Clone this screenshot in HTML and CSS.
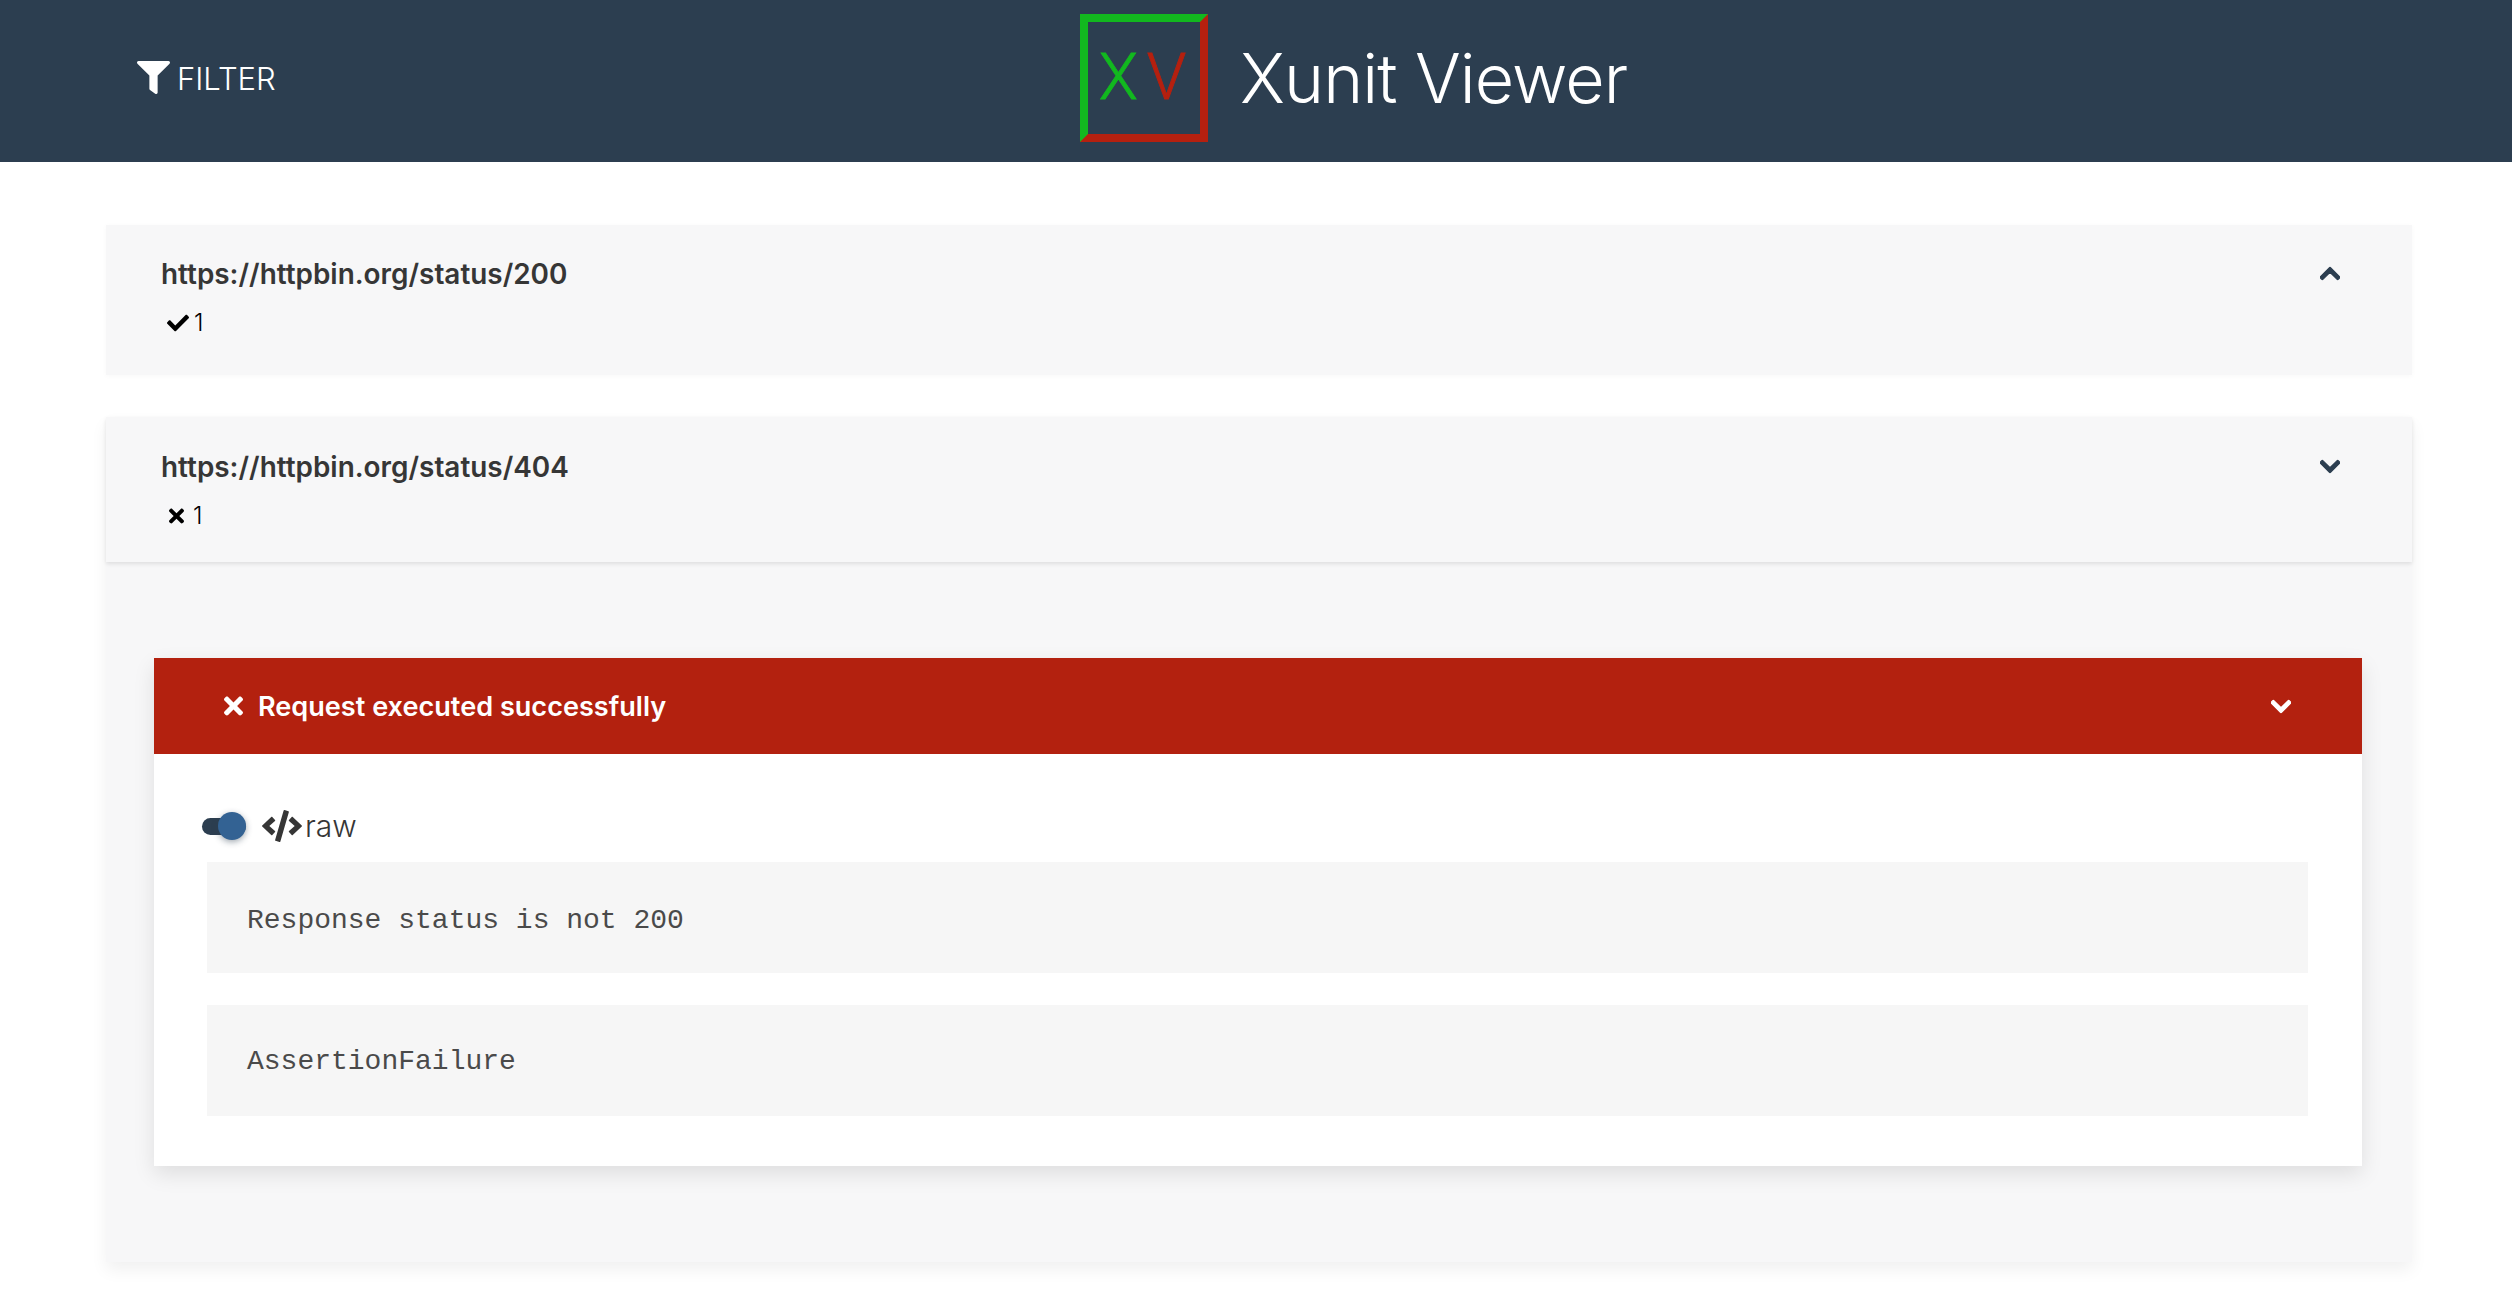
FILE: index.html
```html
<!DOCTYPE html>
<html lang="en">
<head>
<meta charset="utf-8">
<title>Xunit Viewer</title>
<link rel="stylesheet" href="styles.css">
</head>
<body>
<header class="topbar">
  <button class="filter-btn">
    <svg class="filter-icon" viewBox="0 0 512 512"><path d="M487.976 0H24.028C2.71 0-8.047 25.866 7.058 40.971L192 225.941V432c0 7.831 3.821 15.17 10.237 19.662l80 55.98C298.02 518.69 320 507.493 320 487.98V225.941l184.947-184.97C520.021 25.896 509.338 0 487.976 0z"/></svg>
    <span>FILTER</span>
  </button>
  <div class="brand">
    <div class="logo"><span class="logo-x">X</span><span class="logo-v">V</span></div>
    <h1 class="brand-name">Xunit Viewer</h1>
  </div>
</header>
<main class="suites">
  <section class="suite">
    <div class="suite-head">
      <div>
        <h2 class="suite-title">https://httpbin.org/status/200</h2>
        <div class="count">
          <svg class="count-check" viewBox="0 0 512 512"><path d="M173.898 439.404l-166.4-166.4c-9.997-9.997-9.997-26.206 0-36.204l36.203-36.204c9.997-9.998 26.207-9.998 36.204 0L192 312.69 432.095 72.596c9.997-9.997 26.207-9.997 36.204 0l36.203 36.204c9.997 9.997 9.997 26.206 0 36.204l-294.4 294.401c-9.998 9.997-26.207 9.997-36.204-.001z"/></svg>
          <span>1</span>
        </div>
      </div>
      <svg class="chevron" viewBox="0 0 448 512"><path d="M240.971 130.524l194.343 194.343c9.373 9.373 9.373 24.569 0 33.941l-22.667 22.667c-9.357 9.357-24.522 9.375-33.901.04L224 227.495 69.255 381.516c-9.379 9.335-24.544 9.317-33.901-.04l-22.667-22.667c-9.373-9.373-9.373-24.569 0-33.941L207.03 130.525c9.372-9.373 24.568-9.373 33.941-.001z"/></svg>
    </div>
  </section>
  <section class="suite suite-open">
    <div class="suite-head suite-head-open">
      <div>
        <h2 class="suite-title">https://httpbin.org/status/404</h2>
        <div class="count">
          <svg class="count-times" viewBox="0 0 352 512"><path d="M242.72 256l100.07-100.07c12.28-12.28 12.28-32.19 0-44.48l-22.24-22.24c-12.28-12.28-32.19-12.28-44.48 0L176 189.28 75.93 89.21c-12.28-12.28-32.19-12.28-44.48 0L9.21 111.45c-12.28 12.28-12.28 32.19 0 44.48L109.28 256 9.21 356.07c-12.28 12.28-12.28 32.19 0 44.48l22.24 22.24c12.28 12.28 32.2 12.28 44.48 0L176 322.72l100.07 100.07c12.28 12.28 32.2 12.28 44.48 0l22.24-22.24c12.28-12.28 12.28-32.19 0-44.48L242.72 256z"/></svg>
          <span>1</span>
        </div>
      </div>
      <svg class="chevron" viewBox="0 0 448 512"><path d="M207.029 381.476L12.686 187.132c-9.373-9.373-9.373-24.569 0-33.941l22.667-22.667c9.357-9.357 24.522-9.375 33.901-.04L224 284.505l154.745-154.021c9.379-9.335 24.544-9.317 33.901.04l22.667 22.667c9.373 9.373 9.373 24.569 0 33.941L240.971 381.476c-9.373 9.372-24.569 9.372-33.942 0z"/></svg>
    </div>
    <div class="suite-body">
      <article class="test">
        <div class="test-head">
          <div class="test-label">
            <svg class="test-times" viewBox="0 0 352 512"><path d="M242.72 256l100.07-100.07c12.28-12.28 12.28-32.19 0-44.48l-22.24-22.24c-12.28-12.28-32.19-12.28-44.48 0L176 189.28 75.93 89.21c-12.28-12.28-32.19-12.28-44.48 0L9.21 111.45c-12.28 12.28-12.28 32.19 0 44.48L109.28 256 9.21 356.07c-12.28 12.28-12.28 32.19 0 44.48l22.24 22.24c12.28 12.28 32.2 12.28 44.48 0L176 322.72l100.07 100.07c12.28 12.28 32.2 12.28 44.48 0l22.24-22.24c12.28-12.28 12.28-32.19 0-44.48L242.72 256z"/></svg>
            <span>Request executed successfully</span>
          </div>
          <svg class="chevron chevron-light" viewBox="0 0 448 512"><path d="M207.029 381.476L12.686 187.132c-9.373-9.373-9.373-24.569 0-33.941l22.667-22.667c9.357-9.357 24.522-9.375 33.901-.04L224 284.505l154.745-154.021c9.379-9.335 24.544-9.317 33.901.04l22.667 22.667c9.373 9.373 9.373 24.569 0 33.941L240.971 381.476c-9.373 9.372-24.569 9.372-33.942 0z"/></svg>
        </div>
        <div class="test-body">
          <div class="raw-row">
            <div class="toggle"><span class="toggle-knob"></span></div>
            <svg class="code-icon" viewBox="0 0 640 512"><path d="M278.9 511.5l-61-17.7c-6.4-1.8-10-8.5-8.2-14.9L346.2 8.7c1.8-6.4 8.5-10 14.9-8.2l61 17.7c6.4 1.8 10 8.5 8.2 14.9L293.8 503.3c-1.9 6.4-8.5 10.1-14.9 8.2zm-114-112.2l43.5-46.4c4.6-4.9 4.3-12.7-.8-17.2L117 256l90.6-79.7c5.1-4.5 5.5-12.3.8-17.2l-43.5-46.4c-4.5-4.8-12.1-5.1-17-.5L3.8 247.2c-5.1 4.7-5.1 12.8 0 17.5l144.1 135.1c4.9 4.6 12.5 4.4 17-.5zm327.2.6l144.1-135.1c5.1-4.7 5.1-12.8 0-17.5L492.1 112.1c-4.8-4.5-12.4-4.3-17 .5L431.6 159c-4.6 4.9-4.3 12.7.8 17.2L523 256l-90.6 79.7c-5.1 4.5-5.5 12.3-.8 17.2l43.5 46.4c4.5 4.9 12.1 5.1 17 .6z"/></svg>
            <span class="raw-label">raw</span>
          </div>
          <pre class="output output-message">Response status is not 200</pre>
          <pre class="output">AssertionFailure</pre>
        </div>
      </article>
    </div>
  </section>
</main>
</body>
</html>
```
FILE: styles.css
```css
* { box-sizing: border-box; }
html, body { margin: 0; padding: 0; background: #fff; }
body { font-family: Inter, "Liberation Sans", sans-serif; color: #363636; height: 1306px; overflow: hidden; }

.topbar { height: 162px; background: #2c3e50; display: flex; align-items: center; padding: 0 0 6px 137px; }
.filter-btn { display: flex; align-items: center; gap: 7px; background: none; border: 0; padding: 0; color: #fff; font: 300 31px Inter, sans-serif; width: 139px; }
.filter-icon { width: 33px; height: 33px; fill: #fff; margin-top: -2px; }
.brand { display: flex; align-items: center; margin-left: 804px; }
.logo { width: 128px; height: 128px; border: 8px solid; border-color: #12b81f #b5200f #b5200f #12b81f; display: flex; align-items: center; justify-content: center; gap: 9px; padding-right: 3px; font: 300 64px/1 Roboto, sans-serif; -webkit-text-stroke: .8px; }
.logo-x { color: #12b81f; }
.logo-v { color: #b5200f; }
.brand-name { margin: 0 0 0 32px; color: #fff; font: 300 68px/1 Inter, sans-serif; letter-spacing: -.9px; }

.suites { padding: 63px 100px 0 106px; display: flex; flex-direction: column; gap: 42px; }
.suite { background: #f7f7f8; box-shadow: 0 1px 5px rgba(0,0,0,.03); }
.suite-open { box-shadow: 0 8px 16px rgba(0,0,0,.06); }
.suite-head { height: 150px; padding: 32px 72px 0 55px; display: flex; justify-content: space-between; align-items: flex-start; }
.suite-head-open { height: 145px; padding-top: 33px; box-shadow: 0 2px 4px rgba(0,0,0,.1); position: relative; }
.suite-title { margin: 0; font: 600 27.9px/35px Inter, sans-serif; color: #363636; }
.count { display: flex; align-items: center; gap: 5px; margin-top: 17px; padding-left: 6px; font: 300 24px/1.2 Inter, sans-serif; color: #000; }
.count-check { width: 22px; height: 22px; }
.count-times { width: 15px; height: 22px; margin: 0 4px 0 2px; }
.chevron { width: 20px; height: 23px; fill: #2c3e50; stroke: #2c3e50; stroke-width: 28; margin-top: 5px; }

.suite-body { padding: 96px 50px 96px 48px; }
.test { background: #fff; box-shadow: 0 8px 20px rgba(0,0,0,.1); }
.test-head { height: 96px; background: #b3210f; display: flex; align-items: center; justify-content: space-between; padding: 0 71px 0 70px; color: #fff; }
.test-label { display: flex; align-items: center; gap: 15px; font: 600 27.1px Inter, sans-serif; }
.test-times { width: 19px; height: 28px; fill: #fff; }
.chevron-light { fill: #fff; stroke: #fff; margin: 0; }
.test-body { padding: 58px 54px 50px 53px; }
.raw-row { display: flex; align-items: center; margin: 0 0 22px -5px; height: 28px; }
.toggle { width: 44px; height: 17px; background: #2c3e50; border-radius: 9px; position: relative; }
.toggle-knob { position: absolute; right: 0; top: -6px; width: 28px; height: 28px; border-radius: 50%; background: #336293; box-shadow: 0 2px 6px rgba(44,62,80,.45); }
.code-icon { width: 40px; height: 32px; margin-left: 16px; fill: #363636; }
.raw-label { margin-left: 3px; font: 300 30px/28px Inter, sans-serif; color: #363636; }
.output { margin: 0 0 32px; height: 111px; padding: 0 40px; background: #f6f6f6; font: 28px/113px "Liberation Mono", monospace; color: #4a4a4a; }
.output-message { padding-top: 2px; }
.output:last-child { margin-bottom: 0; }
```
